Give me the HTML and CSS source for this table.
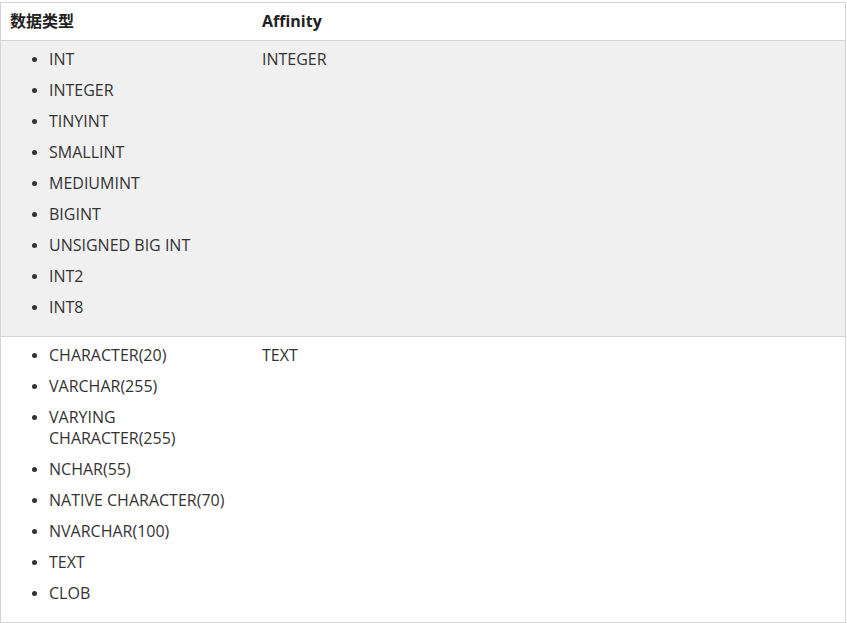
FILE: index.html
```html
<!DOCTYPE html>
<html lang="zh">
<head>
<meta charset="utf-8">
<title>SQLite Affinity</title>
<link rel="stylesheet" href="styles.css">
</head>
<body>
<table class="reference">
  <thead>
    <tr>
      <th class="col-type">数据类型</th>
      <th class="col-aff">Affinity</th>
    </tr>
  </thead>
  <tbody>
    <tr class="row-alt">
      <td>
        <ul class="types">
          <li>INT</li>
          <li>INTEGER</li>
          <li>TINYINT</li>
          <li>SMALLINT</li>
          <li>MEDIUMINT</li>
          <li>BIGINT</li>
          <li>UNSIGNED BIG INT</li>
          <li>INT2</li>
          <li>INT8</li>
        </ul>
      </td>
      <td>INTEGER</td>
    </tr>
    <tr class="row-last">
      <td>
        <ul class="types">
          <li>CHARACTER(20)</li>
          <li>VARCHAR(255)</li>
          <li>VARYING CHARACTER(255)</li>
          <li>NCHAR(55)</li>
          <li>NATIVE CHARACTER(70)</li>
          <li>NVARCHAR(100)</li>
          <li>TEXT</li>
          <li>CLOB</li>
        </ul>
      </td>
      <td>TEXT</td>
    </tr>
  </tbody>
</table>
</body>
</html>
```

FILE: styles.css
```css
html, body {
  margin: 0;
  padding: 0;
  background: #fff;
}
body {
  padding-top: 2px;
  font-family: "Open Sans", "Noto Sans CJK SC", sans-serif;
  color: #333;
}
.reference {
  width: 846px;
  table-layout: fixed;
  border-collapse: separate;
  border-spacing: 0;
  border: 1px solid #d4d4d4;
}
.reference th,
.reference td {
  text-align: left;
  vertical-align: top;
  padding: 8px 9px;
  line-height: 21px;
  border-bottom: 1px solid #d4d4d4;
}
.reference th {
  font-size: 16px;
  font-weight: bold;
  color: #222;
  background: #fff;
}
.reference td {
  font-size: 16px;
}
.reference .col-type {
  width: 234px;
}
.row-alt td {
  background: #f0f0f0;
}
.row-last td {
  border-bottom: none;
}
.types {
  margin: 0;
  padding-left: 39px;
}
.types li {
  margin-bottom: 10px;
  padding-right: 10px;
}
.types li::marker {
  font-size: 14px;
  color: #333;
}
```
